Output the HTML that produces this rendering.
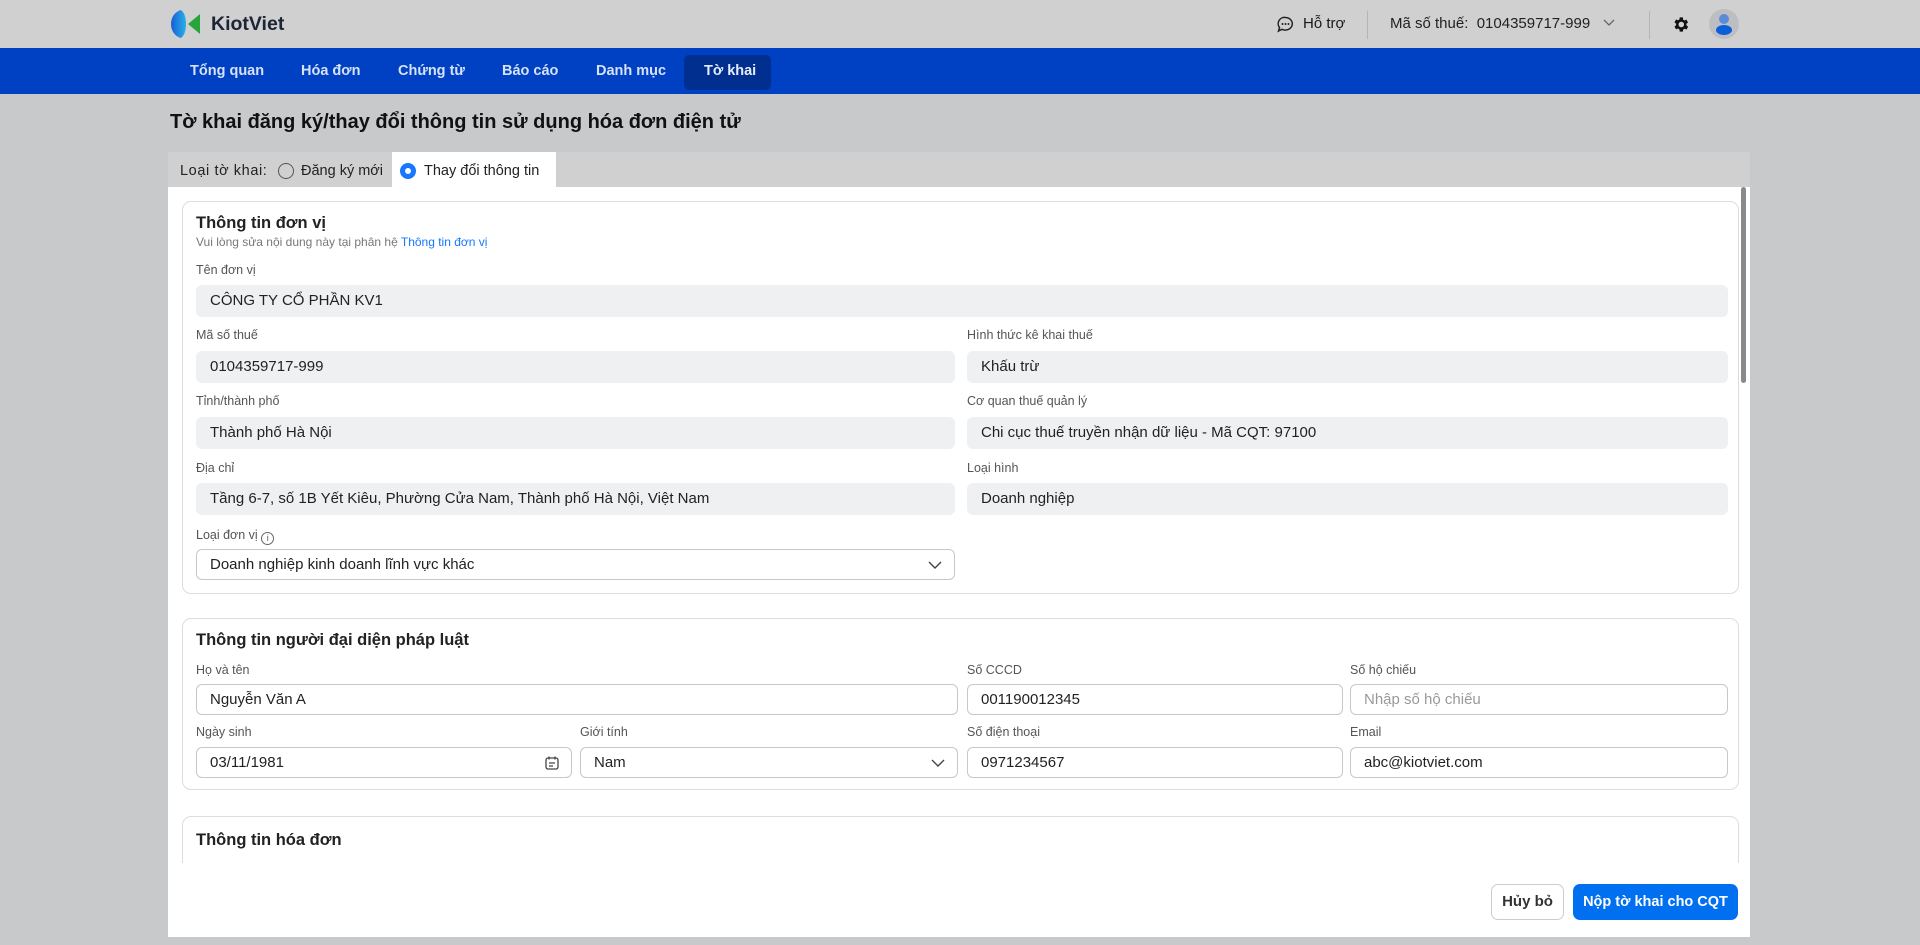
<!DOCTYPE html>
<html><head><meta charset="utf-8"><style>
*{box-sizing:border-box;margin:0;padding:0}
body{width:1920px;height:945px;overflow:hidden;background:#c8c9cb;font-family:"Liberation Sans",Arial,sans-serif;color:#1a1a1a;position:relative}
.a{position:absolute}
.hdr{left:0;top:0;width:1920px;height:48px;background:#d0d0d0}
.nav{left:0;top:48px;width:1920px;height:46px;background:#0041c4}
.nav span{position:absolute;top:15px;font-size:14.5px;font-weight:bold;color:#d6e2f7}
.lbl{font-size:12.5px;color:#555}
.inp{position:absolute;height:32px;background:#eff0f2;border-radius:6px;font-size:15px;line-height:32px;padding-left:14px;color:#222}
.w{background:#fff;border:1px solid #c8c8c8;height:31px;line-height:29px;padding-left:13px}
.card{position:absolute;left:182px;width:1557px;border:1px solid #dcdde0;border-radius:9px;background:#fff}
.ct{font-size:16.5px;font-weight:bold;color:#222}
</style></head><body>
<div class="a hdr"></div>
<svg class="a" style="left:170px;top:9px" width="32" height="30" viewBox="0 0 32 30"><defs><linearGradient id="g" x1="0" x2="1"><stop offset="0" stop-color="#1a5fd6"/><stop offset="1" stop-color="#27b0e6"/></linearGradient></defs><path d="M11 1C4 3 1 9 1 15s3 12 10 14c4-3 5-9 5-14S15 4 11 1z" fill="url(#g)"/><path d="M30 5L18 15l12 10z" fill="#27a43a"/></svg>
<div class="a" style="left:211px;top:13px;font-size:19.5px;font-weight:bold;color:#1c2536">KiotViet</div>
<svg class="a" style="left:1277px;top:16px" width="17" height="17" viewBox="0 0 17 17"><path d="M8.5 1.5a7 6.3 0 1 1-3.6 11.8L1.5 15l1-3.4A6.3 6.3 0 0 1 8.5 1.5z" fill="none" stroke="#222" stroke-width="1.5"/><circle cx="5.5" cy="8" r="1" fill="#222"/><circle cx="8.5" cy="8" r="1" fill="#222"/><circle cx="11.5" cy="8" r="1" fill="#222"/></svg>
<div class="a" style="left:1303px;top:15px;font-size:15px">Hỗ trợ</div>
<div class="a" style="left:1367px;top:11px;width:1px;height:28px;background:#b5b5b5"></div>
<div class="a" style="left:1390px;top:15px;font-size:15px;color:#222">Mã số thuế:&nbsp; 0104359717-999</div>
<svg class="a" style="left:1603px;top:19px" width="12" height="8" viewBox="0 0 12 8"><path d="M1 1l5 5 5-5" fill="none" stroke="#666" stroke-width="1.3"/></svg>
<div class="a" style="left:1649px;top:11px;width:1px;height:28px;background:#b5b5b5"></div>
<svg class="a" style="left:1671px;top:15px" width="19" height="19" viewBox="0 0 24 24"><path fill="#111" d="M19.4 13a7.5 7.5 0 0 0 0-2l2.1-1.6-2-3.5-2.5 1a7 7 0 0 0-1.7-1L15 3h-4l-.4 2.7a7 7 0 0 0-1.7 1l-2.5-1-2 3.5L6.5 11a7.5 7.5 0 0 0 0 2l-2.1 1.6 2 3.5 2.5-1a7 7 0 0 0 1.7 1L11 21h4l.4-2.7a7 7 0 0 0 1.7-1l2.5 1 2-3.5zM13 15.5a3.5 3.5 0 1 1 0-7 3.5 3.5 0 0 1 0 7z"/></svg>
<div class="a" style="left:1709px;top:9px;width:30px;height:30px;border-radius:50%;background:#bdbec2;overflow:hidden"><div class="a" style="left:10px;top:5px;width:10px;height:10px;border-radius:50%;background:#5b8bd6"></div><div class="a" style="left:7px;top:16px;width:16px;height:10px;border-radius:50%;background:#0a5ed8"></div></div>
<div class="a nav"><span style="left:190px">Tổng quan</span><span style="left:301px">Hóa đơn</span><span style="left:398px">Chứng từ</span><span style="left:502px">Báo cáo</span><span style="left:596px">Danh mục</span>
<div class="a" style="left:684px;top:7px;width:87px;height:35px;background:#002f8f;border-radius:5px"></div><span style="left:704px;color:#e6ecf8">Tờ khai</span></div>
<div class="a" style="left:170px;top:111px;font-size:20px;font-weight:bold;color:#111">Tờ khai đăng ký/thay đổi thông tin sử dụng hóa đơn điện tử</div>
<div class="a" style="left:168px;top:152px;width:1582px;height:35px;background:#d0d0d0"></div>
<div class="a" style="left:392px;top:152px;width:164px;height:36px;background:#fff"></div>
<div class="a" style="left:180px;top:163px;font-size:14.5px;color:#222;letter-spacing:0.6px">Loại tờ khai:</div>
<div class="a" style="left:278px;top:163px;width:16px;height:16px;border:1.5px solid #555;border-radius:50%"></div>
<div class="a" style="left:301px;top:163px;font-size:14.5px;color:#222">Đăng ký mới</div>
<div class="a" style="left:400px;top:163px;width:16px;height:16px;border:5px solid #1677ff;border-radius:50%;background:#fff"></div>
<div class="a" style="left:424px;top:163px;font-size:14.5px;color:#222">Thay đổi thông tin</div>
<div class="a" style="left:168px;top:187px;width:1582px;height:750px;background:#fff;overflow:hidden">
<div class="a" style="left:1573px;top:0;width:5px;height:196px;background:#8a8a8a;border-radius:3px"></div>
</div>
<div class="a" style="left:168px;top:187px;width:1572px;height:676px;overflow:hidden">
<div class="card" style="left:14px;top:14px;height:393px">
<div class="a ct" style="left:13px;top:12px">Thông tin đơn vị</div>
<div class="a" style="left:13px;top:33px;font-size:12px;color:#777">Vui lòng sửa nội dung này tại phân hệ <span style="color:#1677ff">Thông tin đơn vị</span></div>
<div class="a lbl" style="left:13px;top:61px">Tên đơn vị</div>
<div class="inp" style="left:13px;top:83px;width:1532px">CÔNG TY CỔ PHẦN KV1</div>
<div class="a lbl" style="left:13px;top:126px">Mã số thuế</div>
<div class="inp" style="left:13px;top:149px;width:759px">0104359717-999</div>
<div class="a lbl" style="left:784px;top:126px">Hình thức kê khai thuế</div>
<div class="inp" style="left:784px;top:149px;width:761px">Khấu trừ</div>
<div class="a lbl" style="left:13px;top:192px">Tỉnh/thành phố</div>
<div class="inp" style="left:13px;top:215px;width:759px">Thành phố Hà Nội</div>
<div class="a lbl" style="left:784px;top:192px">Cơ quan thuế quản lý</div>
<div class="inp" style="left:784px;top:215px;width:761px">Chi cục thuế truyền nhận dữ liệu - Mã CQT: 97100</div>
<div class="a lbl" style="left:13px;top:259px">Địa chỉ</div>
<div class="inp" style="left:13px;top:281px;width:759px">Tầng 6-7, số 1B Yết Kiêu, Phường Cửa Nam, Thành phố Hà Nội, Việt Nam</div>
<div class="a lbl" style="left:784px;top:259px">Loại hình</div>
<div class="inp" style="left:784px;top:281px;width:761px">Doanh nghiệp</div>
<div class="a lbl" style="left:13px;top:326px">Loại đơn vị <span style="display:inline-block;width:13px;height:13px;border:1px solid #666;border-radius:50%;font-size:9px;text-align:center;line-height:11px;vertical-align:-2px">i</span></div>
<div class="inp w" style="left:13px;top:347px;width:759px">Doanh nghiệp kinh doanh lĩnh vực khác</div>
<svg class="a" style="left:745px;top:359px" width="14" height="8" viewBox="0 0 14 8"><path d="M1 1l6 6 6-6" fill="none" stroke="#444" stroke-width="1.4"/></svg>
</div>
<div class="card" style="left:14px;top:431px;height:172px">
<div class="a ct" style="left:13px;top:12px">Thông tin người đại diện pháp luật</div>
<div class="a lbl" style="left:13px;top:44px">Họ và tên</div>
<div class="inp w" style="left:13px;top:65px;width:762px">Nguyễn Văn A</div>
<div class="a lbl" style="left:784px;top:44px">Số CCCD</div>
<div class="inp w" style="left:784px;top:65px;width:376px">001190012345</div>
<div class="a lbl" style="left:1167px;top:44px">Số hộ chiếu</div>
<div class="inp w" style="left:1167px;top:65px;width:378px;color:#999">Nhập số hộ chiếu</div>
<div class="a lbl" style="left:13px;top:106px">Ngày sinh</div>
<div class="inp w" style="left:13px;top:128px;width:376px">03/11/1981</div>
<svg class="a" style="left:362px;top:137px" width="14" height="14" viewBox="0 0 14 14"><rect x="1" y="2" width="12" height="11" rx="2" fill="none" stroke="#444" stroke-width="1.3"/><path d="M4 0.5v3M10 0.5v3M4 7h6M4 10h4" stroke="#444" stroke-width="1.3"/></svg>
<div class="a lbl" style="left:397px;top:106px">Giới tính</div>
<div class="inp w" style="left:397px;top:128px;width:378px">Nam</div>
<svg class="a" style="left:748px;top:140px" width="14" height="8" viewBox="0 0 14 8"><path d="M1 1l6 6 6-6" fill="none" stroke="#444" stroke-width="1.4"/></svg>
<div class="a lbl" style="left:784px;top:106px">Số điện thoại</div>
<div class="inp w" style="left:784px;top:128px;width:376px">0971234567</div>
<div class="a lbl" style="left:1167px;top:106px">Email</div>
<div class="inp w" style="left:1167px;top:128px;width:378px">abc@kiotviet.com</div>
</div>
<div class="card" style="left:14px;top:629px;height:120px">
<div class="a ct" style="left:13px;top:14px">Thông tin hóa đơn</div>
</div>
</div>
<div class="a" style="left:1491px;top:884px;width:73px;height:36px;border:1px solid #ccc;border-radius:7px;background:#fff;font-size:15px;font-weight:bold;text-align:center;line-height:34px;color:#333">Hủy bỏ</div>
<div class="a" style="left:1573px;top:884px;width:165px;height:36px;border-radius:7px;background:#0070f0;font-size:14.5px;font-weight:bold;text-align:center;line-height:36px;color:#fff">Nộp tờ khai cho CQT</div>
</body></html>
